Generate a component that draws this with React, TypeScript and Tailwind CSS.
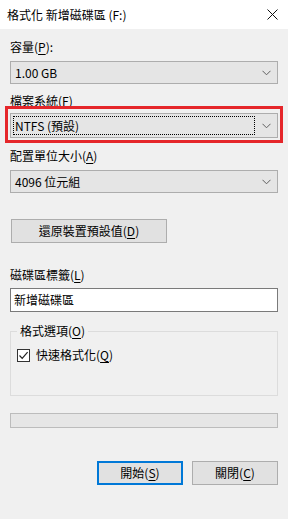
import React from "react";

const FONT = { fontFamily: '"Noto Sans CJK TC", "Noto Sans", sans-serif' };

function U({ children }: { children: React.ReactNode }) {
  return <span className="underline underline-offset-2">{children}</span>;
}

function Chevron() {
  return (
    <svg width="9" height="6" viewBox="0 0 9 6" className="shrink-0">
      <path d="M0.5 0.8 L4.5 4.8 L8.5 0.8" fill="none" stroke="#5f5f5f" strokeWidth="1" />
    </svg>
  );
}

function Combo({ value, focused = false, h = "h-[23px]" }: { value: string; focused?: boolean; h?: string }) {
  return (
    <div className={`${h} flex items-center border border-[#adadad] bg-[#e5e5e5] pl-[2px] pr-[5px]`}>
      <div
        className={`flex h-full flex-1 items-center py-[2px] ${focused ? "" : ""}`}
      >
        <div
          className={`flex h-full flex-1 items-center pl-[1px] ${
            focused ? "border border-dotted border-black" : "border border-transparent"
          }`}
        >
          <span className="text-[12px] leading-none text-black">{value}</span>
        </div>
      </div>
      <div className="ml-[5px] flex w-[12px] justify-center">
        <Chevron />
      </div>
    </div>
  );
}

export default function App() {
  return (
    <div className="h-[519px] w-[288px] overflow-hidden bg-[#f0f0f0] text-black" style={FONT}>
      {/* 標題列 */}
      <div className="flex h-[29px] items-center justify-between bg-white pl-[7px] pr-[10px]">
        <span className="text-[12px] leading-none">格式化 新增磁碟區 (F:)</span>
        <svg width="11" height="11" viewBox="0 0 11 11">
          <path d="M0.5 0.5 L10.5 10.5 M10.5 0.5 L0.5 10.5" stroke="#111" strokeWidth="1" />
        </svg>
      </div>

      <div className="relative px-[10px] pt-[10px] text-[12px]">
        <div className="h-[16px] leading-[16px]">
          容量(<U>P</U>):
        </div>
        <div className="mt-[6px]">
          <Combo value="1.00 GB" />
        </div>

        <div className="mt-[9px] h-[16px] leading-[16px]">
          檔案系統(<U>F</U>)
        </div>
        <div className="mt-[4px]">
          <Combo value="NTFS (預設)" focused h="h-[25px]" />
        </div>

        <div className="mt-[10px] h-[16px] leading-[16px]">
          配置單位大小(<U>A</U>)
        </div>
        <div className="mt-[6px]">
          <Combo value="4096 位元組" />
        </div>

        <button className="ml-[1px] mt-[26px] flex h-[24px] w-[156px] items-center justify-center border border-[#adadad] bg-[#e1e1e1] text-[12px] leading-none">
          還原裝置預設值(<U>D</U>)
        </button>

        <div className="mt-[24px] h-[16px] leading-[16px]">
          磁碟區標籤(<U>L</U>)
        </div>
        <div className="mt-[5px] flex h-[24px] items-center border border-[#7a7a7a] bg-white pl-[3px]">
          <span className="leading-none">新增磁碟區</span>
        </div>

        {/* 格式選項 */}
        <div className="relative mt-[19px] h-[65px] border border-[#dcdcdc]">
          <span className="absolute left-[6px] top-[-9px] bg-[#f0f0f0] px-[3px] leading-[16px]">
            格式選項(<U>O</U>)
          </span>
          <div className="ml-[6px] mt-[15px] flex items-center gap-[6px]">
            <div className="flex h-[13px] w-[13px] items-center justify-center border border-[#333] bg-white">
              <svg width="11" height="11" viewBox="0 0 11 11">
                <path d="M1.5 5.5 L4.2 8.3 L9.6 2.2" fill="none" stroke="#222" strokeWidth="1.2" />
              </svg>
            </div>
            <span className="leading-[16px]">
              快速格式化(<U>Q</U>)
            </span>
          </div>
        </div>

        {/* 進度列 */}
        <div className="mt-[17px] h-[15px] border border-[#bcbcbc] bg-[#e6e6e6]" />

        <div className="mt-[33px] flex justify-end gap-[9px]">
          <button className="flex h-[24px] w-[86px] items-center justify-center border-2 border-[#0078d7] bg-[#e1e1e1] text-[12px] leading-none">
            開始(<U>S</U>)
          </button>
          <button className="flex h-[24px] w-[86px] items-center justify-center border border-[#adadad] bg-[#e1e1e1] text-[12px] leading-none">
            關閉(<U>C</U>)
          </button>
        </div>

        {/* 紅框標示 */}
        <div className="pointer-events-none absolute left-[5px] top-[77px] h-[37px] w-[278px] border-[3px] border-[#e5262a]" />
      </div>
    </div>
  );
}
